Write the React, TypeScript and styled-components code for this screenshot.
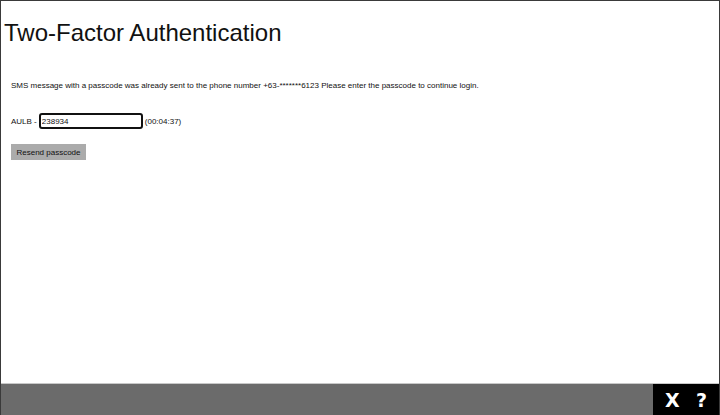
import styled, { createGlobalStyle } from "styled-components";

const Global = createGlobalStyle`
  html, body {
    margin: 0;
    padding: 0;
    background: #fff;
  }
  body {
    font-family: "Liberation Sans", Arial, sans-serif;
    color: #111;
  }
`;

const Frame = styled.div`
  box-sizing: border-box;
  width: 720px;
  height: 415px;
  border: 1px solid #3a3a3a;
  border-bottom: none;
  display: flex;
  flex-direction: column;
`;

const Main = styled.div`
  flex: 1;
  padding: 0 0 0 3px;
`;

const Title = styled.h1`
  margin: 18px 0 0;
  font-size: 24px;
  font-weight: normal;
  line-height: 28px;
  color: #111;
`;

const Content = styled.div`
  padding: 0 0 0 7px;
`;

const Message = styled.p`
  margin: 34px 0 0;
  font-size: 8px;
  line-height: 10px;
  color: #111;
`;

const Row = styled.div`
  display: flex;
  align-items: center;
  margin-top: 22px;
  font-size: 8px;
  color: #111;
`;

const Input = styled.input`
  box-sizing: border-box;
  width: 104px;
  height: 16px;
  margin: 0 2px 0 2px;
  padding: 0 1px;
  border: 2px solid #111;
  border-radius: 3px;
  font-family: inherit;
  font-size: 8px;
  color: #111;
  outline: none;
`;

const Button = styled.button`
  margin-top: 15px;
  height: 16px;
  width: 75px;
  padding: 0;
  border: none;
  background: #ababab;
  font-family: inherit;
  font-size: 8px;
  color: #111;
`;

const Footer = styled.div`
  height: 31px;
  display: flex;
  background: #6b6b6b;
  border-top: 1px solid #c8c8c8;
`;

const Spacer = styled.div`
  flex: 1;
`;

const Tools = styled.div`
  width: 66px;
  background: #000;
  display: flex;
  align-items: center;
  justify-content: space-around;
  padding: 0 4px;
  box-sizing: border-box;
`;

const Tool = styled.span`
  color: #fff;
  font-family: "DejaVu Sans", sans-serif;
  font-weight: bold;
  font-size: 19px;
  cursor: pointer;
`;

export default function App() {
  return (
    <>
      <Global />
      <Frame>
        <Main>
          <Title>Two-Factor Authentication</Title>
          <Content>
            <Message>
              SMS message with a passcode was already sent to the phone number
              +63-*******6123 Please enter the passcode to continue login.
            </Message>
            <Row>
              AULB -
              <Input defaultValue="238934" />
              (00:04:37)
            </Row>
            <Button>Resend passcode</Button>
          </Content>
        </Main>
        <Footer>
          <Spacer />
          <Tools>
            <Tool>X</Tool>
            <Tool>?</Tool>
          </Tools>
        </Footer>
      </Frame>
    </>
  );
}
